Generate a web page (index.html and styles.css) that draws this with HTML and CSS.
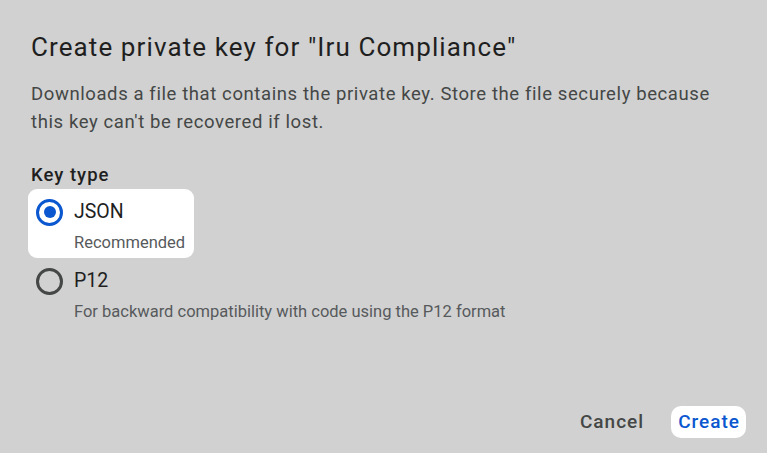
FILE: index.html
```html
<!DOCTYPE html>
<html lang="en">
<head>
<meta charset="utf-8">
<title>Create private key</title>
<link rel="stylesheet" href="styles.css">
</head>
<body>
<div class="dialog">
  <h1 class="title">Create private key for "Iru Compliance"</h1>
  <p class="desc">Downloads a file that contains the private key. Store the file securely because this key can't be recovered if lost.</p>
  <div class="group-label">Key type</div>
  <div class="options">
    <div class="option option-focus">
      <span class="radio radio-checked"><span class="dot"></span></span>
      <div class="opt-text">
        <div class="opt-label">JSON</div>
        <div class="opt-hint">Recommended</div>
      </div>
    </div>
    <div class="option">
      <span class="radio"></span>
      <div class="opt-text">
        <div class="opt-label">P12</div>
        <div class="opt-hint">For backward compatibility with code using the P12 format</div>
      </div>
    </div>
  </div>
  <div class="actions">
    <button class="btn btn-cancel">Cancel</button>
    <button class="btn btn-create">Create</button>
  </div>
</div>
</body>
</html>
```

FILE: styles.css
```css
html, body {
  margin: 0;
  padding: 0;
  height: 100%;
}
body {
  background: #d1d1d1;
  font-family: Roboto, "Noto Sans", "Liberation Sans", sans-serif;
  color: #1f1f1f;
}
.dialog {
  box-sizing: border-box;
  height: 453px;
  display: flex;
  flex-direction: column;
  padding: 31px 21px 15px 31px;
}
.title {
  margin: 0;
  font-size: 26px;
  line-height: 32px;
  font-weight: 400;
  letter-spacing: 1.1px;
  color: #1f1f1f;
}
.desc {
  margin: 17px 0 0 0;
  font-size: 18.5px;
  line-height: 28px;
  letter-spacing: 0.6px;
  color: #444746;
  max-width: 700px;
}
.group-label {
  margin-top: 27px;
  font-size: 18.5px;
  line-height: 24px;
  font-weight: 500;
  letter-spacing: 1px;
  color: #1f1f1f;
}
.options {
  display: flex;
  flex-direction: column;
  align-items: flex-start;
  margin-top: 2px;
  margin-left: -3px;
}
.option {
  display: flex;
  align-items: flex-start;
  gap: 11px;
  padding: 9px 9px 4px 8px;
  border-radius: 9px;
}
.option-focus {
  background: #ffffff;
  width: 149px;
}
.radio {
  box-sizing: border-box;
  width: 27px;
  height: 27px;
  margin-top: 0.5px;
  border-radius: 50%;
  border: 3px solid #444746;
  display: flex;
  align-items: center;
  justify-content: center;
  flex: none;
}
.radio-checked {
  border-color: #0b57d0;
}
.dot {
  width: 12px;
  height: 12px;
  border-radius: 50%;
  background: #0b57d0;
}
.opt-label {
  font-size: 19.5px;
  line-height: 28px;
  color: #1f1f1f;
}
.opt-hint {
  margin-top: 6px;
  font-size: 16.5px;
  line-height: 22px;
  color: #575a5c;
  white-space: nowrap;
}
.actions {
  margin-top: auto;
  display: flex;
  justify-content: flex-end;
  align-items: center;
  gap: 21px;
}
.btn {
  border: none;
  background: transparent;
  font-family: Roboto, "Noto Sans", "Liberation Sans", sans-serif;
  font-size: 19px;
  font-weight: 500;
  letter-spacing: 1px;
  height: 32px;
  line-height: 32px;
  padding: 0 6px 0 7px;
  border-radius: 10px;
  cursor: pointer;
}
.btn-cancel {
  color: #444746;
}
.btn-create {
  color: #0b57d0;
  background: #ffffff;
}
```
